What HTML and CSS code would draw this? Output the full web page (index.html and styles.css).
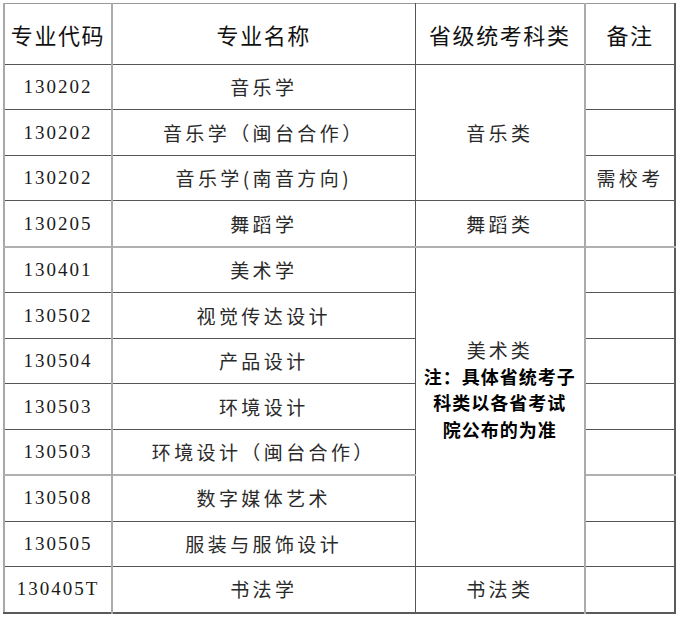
FILE: index.html
```html
<!DOCTYPE html>
<html lang="zh">
<head>
<meta charset="utf-8">
<link rel="stylesheet" href="styles.css">
</head>
<body>
<table class="grid">
  <colgroup>
    <col class="c1"><col class="c2"><col class="c3"><col class="c4">
  </colgroup>
  <thead>
    <tr class="head">
      <th class="g">专业代码</th>
      <th>专业名称</th>
      <th class="g">省级统考科类</th>
      <th>备注</th>
    </tr>
  </thead>
  <tbody>
    <tr><td class="code g">130202</td><td>音乐学</td><td class="g" rowspan="3">音乐类</td><td></td></tr>
    <tr><td class="code g">130202</td><td>音乐学（闽台合作）</td><td></td></tr>
    <tr><td class="code g">130202</td><td>音乐学(南音方向)</td><td>需校考</td></tr>
    <tr><td class="code g">130205</td><td>舞蹈学</td><td class="g">舞蹈类</td><td></td></tr>
    <tr class="gt"><td class="code g">130401</td><td>美术学</td>
      <td class="g art" rowspan="7">
        <div class="art-name">美术类</div>
        <div class="note">注：具体省统考子<br>科类以各省考试<br>院公布的为准</div>
      </td><td></td></tr>
    <tr><td class="code g">130502</td><td>视觉传达设计</td><td></td></tr>
    <tr><td class="code g">130504</td><td>产品设计</td><td></td></tr>
    <tr><td class="code g">130503</td><td>环境设计</td><td></td></tr>
    <tr><td class="code g">130503</td><td>环境设计（闽台合作）</td><td></td></tr>
    <tr class="gt"><td class="code g">130508</td><td>数字媒体艺术</td><td></td></tr>
    <tr><td class="code g">130505</td><td>服装与服饰设计</td><td></td></tr>
    <tr><td class="code g">130405T</td><td>书法学</td><td class="g">书法类</td><td></td></tr>
  </tbody>
</table>
</body>
</html>
```

FILE: styles.css
```css
html, body {
  margin: 0;
  padding: 0;
  background: #ffffff;
}

body {
  padding: 3px 0 0 3px;
  font-family: "Noto Sans CJK SC", "Liberation Serif", sans-serif;
  color: #2a2a2a;
}

.grid {
  border-collapse: collapse;
  table-layout: fixed;
  width: 671px;
  border-top: 1px solid #9a9a9a;
  border-left: 2px solid #a8a8a8;
  border-right: 2px solid #5a5a5a;
  border-bottom: 2px solid #5a5a5a;
}

.c1 { width: 108px; }
.c2 { width: 303px; }
.c3 { width: 170px; }
.c4 { width: 90px; }

.grid th,
.grid td {
  border: 1px solid #555555;
  padding: 0;
  text-align: center;
  vertical-align: middle;
  font-weight: 400;
}

.grid th.g,
.grid td.g {
  border-right: 2px solid #ababab;
}

.grid td:first-child,
.grid th:first-child {
  border-left: none;
}

.grid thead th {
  border-top: none;
}

.head th {
  height: 60px;
  font-size: 22px;
  letter-spacing: 1.6px;
  color: #111111;
}

.grid tbody td {
  height: 44.47px;
  font-size: 19px;
  letter-spacing: 3.4px;
  line-height: 22px;
}

.grid tbody tr.gt td {
  border-top: 2px solid #b0b0b0;
}

.grid td.code {
  font-family: "Liberation Serif", serif;
  font-size: 19px;
  letter-spacing: 2px;
  color: #1a1a1a;
}

.grid td.art {
  vertical-align: top;
  padding-top: 89px;
  letter-spacing: 0;
}

.art-name {
  font-size: 19px;
  letter-spacing: 3px;
  line-height: 26px;
}

.note {
  font-size: 18px;
  font-weight: 700;
  line-height: 26.5px;
  letter-spacing: 1px;
  color: #000000;
}
```
